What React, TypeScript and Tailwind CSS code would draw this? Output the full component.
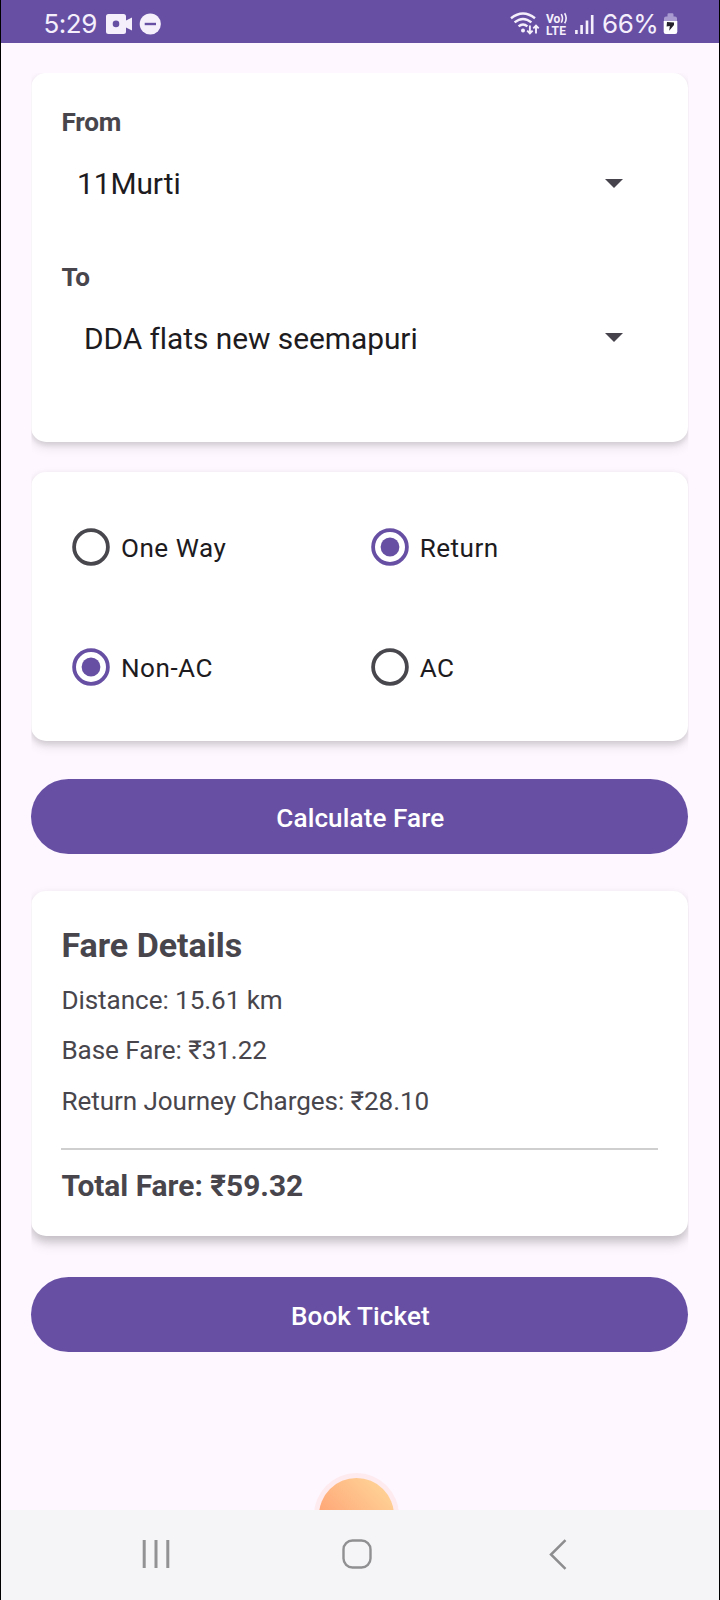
import type { ReactNode } from "react";

function Card({ className, shadow, children }: { className: string; shadow: string; children: ReactNode }) {
  return (
    <div className={`w-[657px] ${className}`}>
      <div className={`h-full w-full rounded-[15px] bg-white px-[30px] ${shadow}`}>{children}</div>
    </div>
  );
}

function Dropdown({ label, value, indent, className }: { label: string; value: string; indent: string; className: string }) {
  return (
    <div className={className}>
      <div className="text-[26.1px] leading-[36px] font-bold tracking-[-0.15px] text-[#48464c]">{label}</div>
      <div className={`mt-[14px] flex h-[60px] items-center justify-between pr-[35px] ${indent}`}>
        <span className="text-[29.9px] leading-[60px] tracking-[-0.05px] text-[#1d1b20]">{value}</span>
        <svg width="18" height="9" viewBox="0 0 18 9" className="-mt-[2px]">
          <path d="M0 0H18L9 9Z" fill="#46434c" />
        </svg>
      </div>
    </div>
  );
}

function Radio({ label, checked }: { label: string; checked?: boolean }) {
  return (
    <div className="flex h-[119.7px] w-[298.7px] items-center">
      <svg width="38" height="38" viewBox="0 0 38 38">
        <circle cx="19" cy="19" r="16.9" fill="none" stroke={checked ? "#6750a4" : "#49474e"} strokeWidth="3.8" />
        {checked && <circle cx="19" cy="19" r="9.4" fill="#6750a4" />}
      </svg>
      <span className="ml-[11px] pt-[2.5px] text-[26.1px] leading-[36px] tracking-[0.5px] text-[#1d1b20]">{label}</span>
    </div>
  );
}

function PillButton({ label, className }: { label: string; className: string }) {
  return (
    <button
      className={`block h-[75px] w-[657px] rounded-full bg-[#6750a4] pt-[2px] pl-[1px] text-center text-[26.1px] leading-[36px] font-medium tracking-[0.1px] text-white ${className}`}
    >
      {label}
    </button>
  );
}

function StatusBar() {
  return (
    <div className="flex h-[43px] items-center justify-between bg-[#6750a4] pr-[41.5px] pl-[42.5px] text-[#f5effc]">
      <div className="flex items-center">
        <span className="pt-[5px] font-['Inter',sans-serif] text-[26px] leading-[36px] tracking-[-0.5px]">5:29</span>
        <svg width="56" height="22" viewBox="0 0 56 22" className="mt-[5px] ml-[9px]">
          <path
            fill="currentColor"
            fillRule="evenodd"
            d="M2.5 1H17.5Q20 1 20 3.5V7.5L26 4.5V17.5L20 14.5V18.5Q20 21 17.5 21H2.5Q0 21 0 18.5V3.5Q0 1 2.5 1ZM10 7.6A3.3 3.3 0 1 0 10 14.2A3.3 3.3 0 1 0 10 7.6Z"
          />
          <circle cx="44.3" cy="11" r="10.6" fill="currentColor" />
          <path d="M38.7 11H50" stroke="#6750a4" strokeWidth="2.4" />
        </svg>
      </div>
      <div className="flex items-center">
        <svg width="84" height="24" viewBox="0 0 84 24" className="mt-[4px] mr-[8px]" fill="none" stroke="currentColor">
          <path d="M1 6.2Q13 -3.4 25 6.2M4.6 10.4Q13 3.4 21.4 10.4M8.6 14.4Q13 10.6 17.4 14.4" strokeWidth="2.4" />
          <circle cx="13" cy="18.6" r="2" fill="currentColor" stroke="none" />
          <path d="M19.9 13.5V21M17.2 18.7L19.9 21.4L22.6 18.7M26 21.5V14M23.3 16.4L26 13.7L28.7 16.4" strokeWidth="1.9" />
          <text x="36" y="10.8" fill="currentColor" stroke="none" className="font-['Roboto',sans-serif] text-[12px] font-bold">
            Vo
          </text>
          <path d="M51.2 2.2Q53.8 6.4 51.2 10.6M54.6 1.2Q57.8 6.2 54.6 11.2" strokeWidth="1.6" />
          <text x="36" y="22.5" fill="currentColor" stroke="none" className="font-['Roboto',sans-serif] text-[12px] font-bold" textLength="20">
            LTE
          </text>
          <path d="M66.4 18V22M71.6 13V22M77 8.4V22M82.2 3V22" strokeWidth="2.6" />
        </svg>
        <span className="pt-[5px] font-['Inter',sans-serif] text-[26px] leading-[36px] tracking-[-0.4px]">66%</span>
        <svg width="15" height="22" viewBox="0 0 15 22" className="mt-[5px] ml-[4px]">
          <path d="M4.5 1.5Q4.5 .3 5.7 .3H9.3Q10.5 .3 10.5 1.5V3.5H12Q14 3.5 14 5.5V10H1V5.5Q1 3.5 3 3.5H4.5Z" fill="#a99bd0" />
          <path d="M.7 8H14.3V18.8Q14.3 21 12.1 21H2.9Q.7 21 .7 18.8Z" fill="#fff" />
          <path d="M4 9L11 9.5L11 12L6.2 17.8L6.8 13L3.6 13.4Z" fill="#25222c" />
        </svg>
      </div>
    </div>
  );
}

function NavBar() {
  return (
    <div className="relative flex h-[90px] items-center bg-[#f5f5f8] pb-[2px]">
      <svg width="28" height="28" viewBox="0 0 28 28" className="ml-[141px]">
        <path d="M2.2 0V28M14 0V28M25.8 0V28" stroke="#929294" strokeWidth="3" />
      </svg>
      <svg width="30" height="30" viewBox="0 0 30 30" className="ml-[171.5px]">
        <rect x="1.5" y="1.5" width="27" height="27" rx="9" fill="none" stroke="#909092" strokeWidth="2.4" />
      </svg>
      <svg width="18" height="31" viewBox="0 0 18 31" className="ml-[177px]">
        <path d="M16.5 1.2L2 15.5L16.5 29.8" fill="none" stroke="#8d8d8f" strokeWidth="2.5" />
      </svg>
    </div>
  );
}

export default function App() {
  return (
    <div className="flex h-[1600px] w-[720px] flex-col overflow-hidden border-r-[1.5px] border-l border-black bg-[#fef7ff] font-['Roboto',sans-serif]">
      <StatusBar />
      <main className="relative h-[1467px] overflow-hidden pt-[30px] pl-[30.4px]">
        <Card
          className="h-[369px] [clip-path:inset(0_0_-30px_0)]"
          shadow="shadow-[0_3px_5px_rgba(0,0,0,0.1),0_5px_12px_rgba(0,0,0,0.1)]"
        >
          <Dropdown className="pt-[31px]" label="From" value="11Murti" indent="pl-[15.5px]" />
          <Dropdown className="pt-[44.5px]" label="To" value="DDA flats new seemapuri" indent="pl-[22.5px]" />
        </Card>
        <Card
          className="mt-[30px] h-[269px] [clip-path:inset(-30px_0)]"
          shadow="shadow-[0_3px_6px_rgba(0,0,0,0.12),0_5px_12px_rgba(0,0,0,0.1)]"
        >
          <div className="grid grid-cols-[298.7px_298.7px] pt-[15px] pl-[10.6px]">
            <Radio label="One Way" />
            <Radio label="Return" checked />
            <Radio label="Non-AC" checked />
            <Radio label="AC" />
          </div>
        </Card>
        <PillButton label="Calculate Fare" className="mt-[38px]" />
        <Card
          className="mt-[37px] h-[345px] [clip-path:inset(-30px_0)]"
          shadow="shadow-[0_5px_8px_rgba(0,0,0,0.14),0_7px_14px_rgba(0,0,0,0.12)]"
        >
          <h2 className="pt-[32px] text-[34px] leading-[44px] font-bold text-[#48464c]">Fare Details</h2>
          <div className="mt-[7.5px] text-[26.1px] leading-[50.6px] tracking-[-0.07px] text-[#48464c]">
            <p>Distance: 15.61 km</p>
            <p>Base Fare: ₹31.22</p>
            <p>Return Journey Charges: ₹28.10</p>
          </div>
          <div className="mt-[21.7px] h-[2px] bg-[#cfcfcf]" />
          <p className="pt-[16.5px] text-[29.9px] leading-[40px] font-bold text-[#48464c]">Total Fare: ₹59.32</p>
        </Card>
        <PillButton label="Book Ticket" className="mt-[41px]" />
        <div className="absolute top-[1430px] left-[313px] h-[85px] w-[85px] rounded-full bg-[#feebef] p-[5px]">
          <div className="h-full w-full rounded-full bg-linear-to-tr from-[#ffa878] from-30% to-[#ffda9c]" />
        </div>
      </main>
      <NavBar />
    </div>
  );
}
